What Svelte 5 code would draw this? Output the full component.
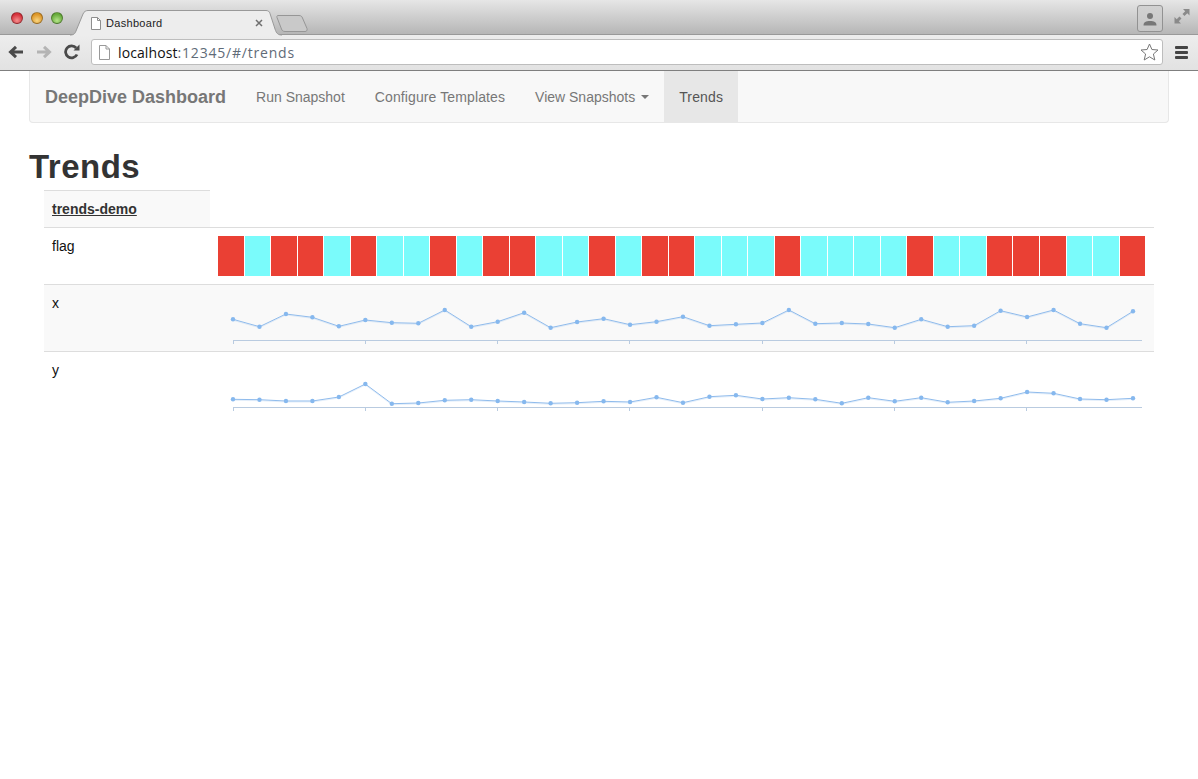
<script>
  // flag cells: 1 = red, 0 = cyan
  const flags = [1,0,1,1,0,1,0,0,1,0,1,1,0,0,1,0,1,1,0,0,0,1,0,0,0,0,1,0,0,1,1,1,0,0,1];

  // sampled chart values, y inside each row
  const xSeries = [35.3,42.7,30,33.3,42.3,36,38.7,39.3,26,42.7,37.7,28.7,43.7,38,34.7,40.7,37.7,32.7,41.7,40.3,39,26,39.7,39,40,43.7,35.3,42.7,41.7,26.7,33,26,39.7,43.7,27.3];
  const ySeries = [48.3,48.7,50,50,46,33,52.7,52,49.3,48.7,50,51,52.3,51.7,50.3,51,46.3,51.7,45.7,44.3,48,46.7,48.3,52.3,46.7,50.3,46.7,51.3,50,47.3,41,42.3,48,48.7,47.3];
  const ticks = [0,1,2,3,4,5,6];

  const rows = [
    { name: 'x', series: xSeries, striped: true },
    { name: 'y', series: ySeries, striped: false }
  ];

  const axisY = 56.5;
  const px = (i) => 15 + i * 26.47;
  const line = (s) => s.map((v, i) => `${px(i).toFixed(1)},${v}`).join(' ');
</script>

<div class="window">
  <div class="titlebar">
    <div class="lights">
      <span class="light red"></span>
      <span class="light amber"></span>
      <span class="light green"></span>
    </div>
    <div class="tab">
      <svg class="tab-shape" width="212" height="26" viewBox="0 0 212 26">
        <path d="M0 25C4 25 5 23.5 6 21L13 4C14 1.5 16 .5 18 .5H196C198 .5 199.5 1.5 200 3.5L205 19C206.5 23.5 208 25 212 25V26H0Z" fill="#ededed"/>
        <path d="M0 25C4 25 5 23.5 6 21L13 4C14 1.5 16 .5 18 .5H196C198 .5 199.5 1.5 200 3.5L205 19C206.5 23.5 208 25 212 25" fill="none" stroke="#999"/>
      </svg>
      <svg class="page-icon" width="10" height="13" viewBox="0 0 10 13">
        <path d="M.5.5H6.5L9.5 3.5V12.5H.5Z" fill="#fff" stroke="#8e8e8e"/>
        <path d="M6.5 .5V3.5H9.5" fill="none" stroke="#8e8e8e"/>
      </svg>
      <span class="tab-title">Dashboard</span>
      <svg class="tab-close" width="8" height="8" viewBox="0 0 8 8">
        <path d="M1 1L7 7M7 1L1 7" stroke="#6f6f6f" stroke-width="1.5"/>
      </svg>
    </div>
    <svg class="new-tab" width="32" height="17" viewBox="0 0 32 17">
      <path d="M2 .5H23C25 .5 26 1.5 26.5 3L31 13.5C31.5 15.5 30.5 16.5 29 16.5H9C7 16.5 6 15.5 5.5 14L1 2.5C.7 1.2 1 .5 2 .5Z" fill="#c9c9c9" stroke="#969696"/>
    </svg>
    <div class="spacer"></div>
    <div class="profile">
      <svg width="14" height="14" viewBox="0 0 14 14">
        <circle cx="7" cy="4" r="3" fill="#777"/>
        <path d="M.5 13.5C.5 10 3 9 7 9S13.5 10 13.5 13.5Z" fill="#777"/>
      </svg>
    </div>
    <svg class="fullscreen" width="16" height="16" viewBox="0 0 16 16">
      <path d="M9 1H15.5V7.5L13.3 5.3L10.5 8L8.5 6L11.2 3.2Z" fill="#8a8a8a"/>
      <path d="M7 15.5H.5V9L2.7 11.2L5.5 8.5L7.5 10.5L4.8 13.3Z" fill="#8a8a8a"/>
    </svg>
  </div>

  <div class="toolbar">
    <svg class="nav-icon" width="16" height="14" viewBox="0 0 16 14">
      <path d="M15 7H3M8 1.800L2.500 7L8 12.200" fill="none" stroke="#4a4a4a" stroke-width="3"/>
    </svg>
    <svg class="nav-icon" width="16" height="14" viewBox="0 0 16 14">
      <path d="M1 7H13M8 1.800L13.500 7L8 12.200" fill="none" stroke="#b4b4b4" stroke-width="3"/>
    </svg>
    <svg class="nav-icon" width="16" height="16" viewBox="0 0 16 16">
      <path d="M13 10.5A6 6 0 1 1 12.2 4" fill="none" stroke="#4a4a4a" stroke-width="2.8"/>
      <path d="M9.5 6.5H15.5V.5Z" fill="#4a4a4a"/>
    </svg>
    <div class="omnibox">
      <svg width="11" height="15" viewBox="0 0 11 15">
        <path d="M.5.5H7L10.5 4V14.5H.5Z" fill="#fff" stroke="#999"/>
        <path d="M7 .5V4H10.5" fill="none" stroke="#999"/>
      </svg>
      <span class="url"><span class="host">localhost</span>:12345/#/trends</span>
      <div class="spacer"></div>
      <svg width="19" height="18" viewBox="0 0 19 18">
        <path d="M9.5 1L11.9 6.5L18 7L13.4 11L14.8 17L9.5 13.8L4.2 17L5.6 11L1 7L7.1 6.5Z" fill="#fff" stroke="#777"/>
      </svg>
    </div>
    <div class="menu-icon"><i></i><i></i><i></i></div>
  </div>

  <div class="container">
    <nav class="navbar">
      <a class="brand" href="#/">DeepDive Dashboard</a>
      <a class="nav-link" href="#/run">Run Snapshot</a>
      <a class="nav-link wide" href="#/templates">Configure Templates</a>
      <a class="nav-link" href="#/snapshots">View Snapshots <span class="caret"></span></a>
      <a class="nav-link active" href="#/trends">Trends</a>
    </nav>

    <h1>Trends</h1>

    <div class="trends">
      <div class="head-row">
        <div class="head-cell"><a href="#/trends/demo">trends-demo</a></div>
      </div>

      <div class="row flag-row">
        <div class="label">flag</div>
        <div class="flags">
          {#each flags as f}
            <span class="flag" class:on={f === 1}></span>
          {/each}
        </div>
      </div>

      {#each rows as row}
        <div class="row chart-row" class:striped={row.striped}>
          <div class="label">{row.name}</div>
          <svg class="chart" width="936" height="66" viewBox="0 1 936 66">
            <line x1="14.5" x2="924" y1={axisY} y2={axisY} class="axis" />
            {#each ticks as t}
              <line x1={15 + t * 132.25} x2={15 + t * 132.25} y1={axisY} y2={axisY + 3} class="axis" />
            {/each}
            <polyline points={line(row.series)} class="series-shadow" />
            <polyline points={line(row.series)} class="series" />
            {#each row.series as v, i}
              <circle cx={px(i)} cy={v} r="2.2" class="dot" />
            {/each}
          </svg>
        </div>
      {/each}
    </div>
  </div>
</div>

<style>
  :global(body) {
    margin: 0;
    background: #fff;
    font-family: "Liberation Sans", Arial, sans-serif;
    color: #333;
  }

  .window {
    min-height: 779px;
  }

  /* browser chrome */
  .titlebar {
    height: 35px;
    box-sizing: border-box;
    display: flex;
    align-items: flex-start;
    background: linear-gradient(#e6e6e6, #b6b6b6);
    border-bottom: 1px solid #999;
    padding-left: 11px;
  }

  .lights {
    display: flex;
    gap: 8px;
    margin-top: 12px;
  }

  .light {
    width: 12px;
    height: 12px;
    border-radius: 50%;
    box-sizing: border-box;
    border: 1px solid rgba(0, 0, 0, 0.3);
  }

  .red { background: radial-gradient(circle at 50% 75%, #f58f8e, #d5303a 70%); }
  .amber { background: radial-gradient(circle at 50% 75%, #f9d681, #dd9526 70%); }
  .green { background: radial-gradient(circle at 50% 75%, #b5e58a, #66aa3a 70%); }

  .tab {
    position: relative;
    width: 212px;
    height: 26px;
    margin: 10px 0 0 7px;
    display: flex;
    align-items: center;
    box-sizing: border-box;
    padding: 0 19px 0 21px;
    font-size: 11px;
    color: #222;
  }

  .tab-shape {
    position: absolute;
    left: 0;
    top: 0;
  }

  .page-icon, .tab-title, .tab-close {
    position: relative;
  }

  .tab-title {
    margin-left: 5px;
    flex: 1;
    letter-spacing: 0.3px;
  }

  .new-tab {
    margin: 15px 0 0 -6px;
  }

  .spacer {
    flex: 1;
  }

  .profile {
    width: 24px;
    height: 25px;
    margin-top: 5px;
    border: 1px solid #929292;
    border-radius: 3px;
    display: flex;
    align-items: center;
    justify-content: center;
    background: linear-gradient(#d2d2d2, #c6c6c6);
  }

  .fullscreen {
    margin: 8px 8px 0 11px;
  }

  .toolbar {
    height: 36px;
    box-sizing: border-box;
    display: flex;
    align-items: center;
    gap: 12px;
    padding: 0 10px 1px 8px;
    background: linear-gradient(#ededed, #e2e2e2);
    border-bottom: 1px solid #7f7f7f;
  }

  .nav-icon {
    flex: none;
  }

  .omnibox {
    flex: 1;
    height: 26px;
    margin-left: -1px;
    box-sizing: border-box;
    display: flex;
    align-items: center;
    gap: 8px;
    padding: 0 3px 0 7px;
    background: #fff;
    border: 1px solid #bdbdbd;
    border-radius: 3px;
  }

  .url {
    font-family: "Open Sans", sans-serif;
    font-size: 14px;
    color: #5f6b78;
    letter-spacing: 0.8px;
  }

  .host {
    color: #111;
    letter-spacing: 0.1px;
  }

  .menu-icon {
    width: 13px;
    display: flex;
    flex-direction: column;
    gap: 2px;
  }

  .menu-icon i {
    height: 3px;
    background: #444;
    border-radius: 1px;
  }

  /* page */
  .container {
    padding: 0 29px;
  }

  .navbar {
    height: 52px;
    box-sizing: border-box;
    display: flex;
    align-items: stretch;
    background: #f8f8f8;
    border: 1px solid #e7e7e7;
    border-top: 0;
    border-radius: 0 0 4px 4px;
    padding-left: 15px;
  }

  .navbar a {
    text-decoration: none;
    color: #777;
    display: flex;
    align-items: center;
  }

  .brand {
    font-size: 18px;
    font-weight: bold;
    margin-right: 15px;
    padding-top: 2px;
  }

  .nav-link {
    font-size: 14px;
    padding: 0 15px;
    gap: 4px;
  }

  .wide {
    letter-spacing: 0.11px;
  }

  .navbar .nav-link.active {
    color: #555;
    background: #e7e7e7;
    letter-spacing: 0.15px;
  }

  .caret {
    width: 0;
    height: 0;
    border-top: 4px solid #777;
    border-left: 4px solid transparent;
    border-right: 4px solid transparent;
    margin-left: 2px;
  }

  h1 {
    margin: 20px 0 0;
    font-size: 33px;
    line-height: 47px;
    letter-spacing: 0.5px;
    font-weight: bold;
    color: #333;
    height: 47px;
  }

  .trends {
    margin: 0 15px;
    font-size: 14px;
    color: #111;
  }

  .head-row {
    display: flex;
    border-bottom: 1px solid #ddd;
  }

  .head-cell {
    width: 166px;
    height: 37px;
    box-sizing: border-box;
    border-top: 1px solid #ddd;
    background: #f9f9f9;
    padding: 10px 8px 0;
    font-weight: bold;
  }

  .head-cell a {
    color: #333;
  }

  .row {
    display: flex;
    box-sizing: border-box;
    border-bottom: 1px solid #ddd;
  }

  .label {
    width: 166px;
    box-sizing: border-box;
    padding: 11px 8px 0;
    line-height: 15px;
    flex: none;
  }

  .flag-row {
    height: 57px;
  }

  .flags {
    display: flex;
    margin: 8px 0 0 8px;
    width: 927px;
    height: 40px;
  }

  .flag {
    flex: 1 1 0;
    box-sizing: border-box;
    background: #7afbfb;
    border-right: 1px solid #fff;
  }

  .flag.on {
    background: #ea4034;
  }

  .flag:last-child {
    border-right: 0;
  }

  .chart-row {
    height: 67px;
  }

  .chart-row:last-child {
    border-bottom: 0;
  }

  .striped {
    background: #f9f9f9;
  }

  .chart {
    display: block;
    flex: none;
    margin-left: 8px;
    overflow: visible;
  }

  .axis {
    stroke: #b9cbe0;
    stroke-width: 1;
    shape-rendering: crispEdges;
  }

  .series {
    fill: none;
    stroke: #8fbbec;
    stroke-width: 1;
  }

  .series-shadow {
    fill: none;
    stroke: #8fbbec;
    stroke-width: 1;
    opacity: 0.25;
    transform: translateY(1px);
  }

  .dot {
    fill: #86b8ee;
  }
</style>
